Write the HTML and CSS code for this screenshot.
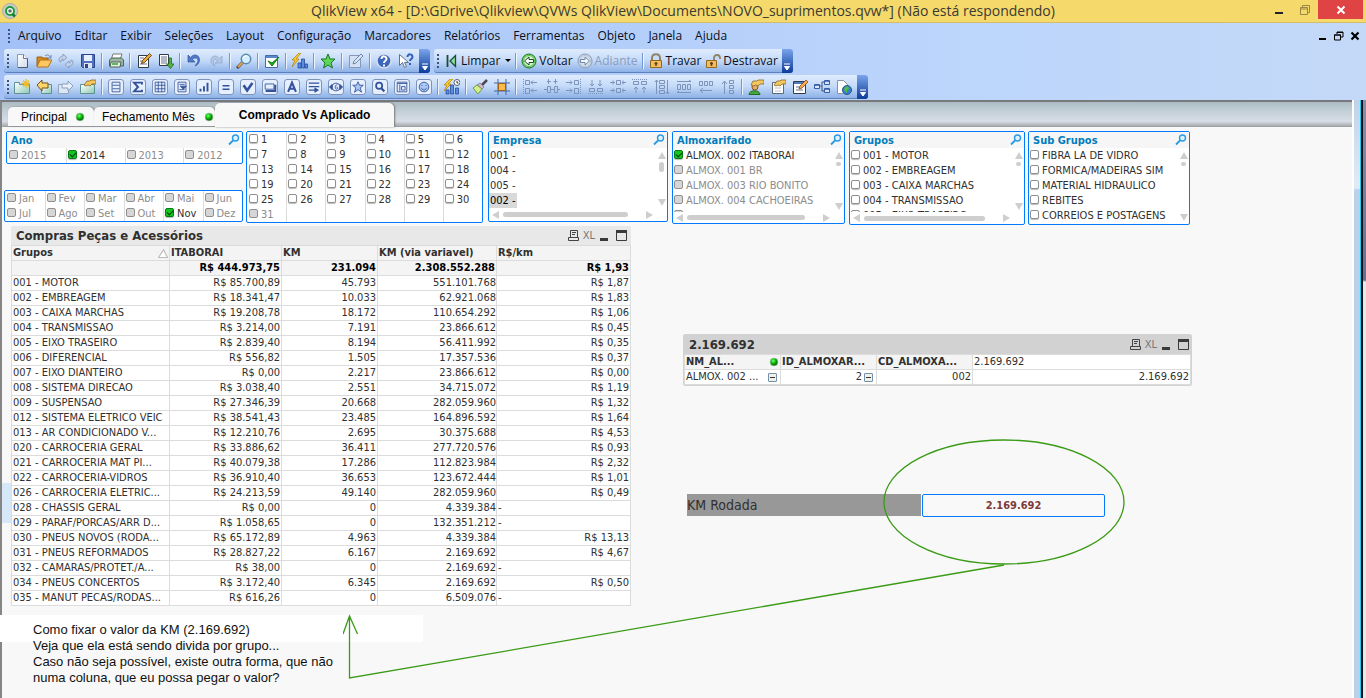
FILE: index.html
```html
<!DOCTYPE html>
<html lang="pt-BR">
<head>
<meta charset="utf-8">
<title>QlikView x64</title>
<link rel="stylesheet" href="styles.css">
</head>
<body>
<svg class="defs" aria-hidden="true">
  <defs>
    <linearGradient id="g-doc" x1="0" y1="0" x2="1" y2="1"><stop offset="0" stop-color="#fff"/><stop offset="1" stop-color="#cfdcec"/></linearGradient>
    <linearGradient id="g-teal" x1="0" y1="0" x2="1" y2="1"><stop offset="0" stop-color="#fff"/><stop offset="1" stop-color="#8cc9b4"/></linearGradient>
    <radialGradient id="g-led" cx=".4" cy=".35"><stop offset="0" stop-color="#7dff7d"/><stop offset=".5" stop-color="#12cf12"/><stop offset="1" stop-color="#067a06"/></radialGradient>
  </defs>
  <symbol id="new" viewBox="0 0 16 16"><path d="M3.5 1.5h6l4 4v9h-10z" fill="url(#g-doc)" stroke="#8d9bb2"/><path d="M9.500 1.500v4h4" fill="#fff" stroke="#6d7c94"/><path d="M4 14.500h9.500v-9" fill="none" stroke="#4d586a"/></symbol>
  <symbol id="open" viewBox="0 0 16 16"><path d="M1 13V4h5l1 1h5v8z" fill="#d58b22" stroke="#9c6214"/><path d="M1 14l3-7h12l-4 7z" fill="#ffc760" stroke="#b1751b"/><path d="M9 3c2-2 4-1 5 1m1-2v3h-3" fill="none" stroke="#657fae"/></symbol>
  <symbol id="reload" viewBox="0 0 16 16"><path d="M1 8c0-4 2-5 4-5V1l4 3.500L5 8V6C3.500 6 3 7 3 9z" fill="#c3d2e8" stroke="#8095b7" stroke-width=".8"/><path d="M15 8c0 4-2 5-4 5v2l-4-3.500L11 8v2c1.500 0 2-1 2-3z" fill="#c3d2e8" stroke="#8095b7" stroke-width=".8"/></symbol>
  <symbol id="save" viewBox="0 0 16 16"><path d="M1.500 1.500h13v13h-12l-1-1z" fill="#5272bd" stroke="#2c448d"/><path d="M4 2h8v6H4z" fill="#e7effc"/><path d="M4 10h8v5H4z" fill="#dfe6ee"/><path d="M5 11h3v4H5z" fill="#2c448d"/></symbol>
  <symbol id="print" viewBox="0 0 16 16"><path d="M5 1h9l-2 6H3z" fill="#fff" stroke="#777"/><path d="M1.500 7l2-2h10l2 2v6h-14z" fill="#9bb6a2" stroke="#4c6654"/><path d="M3 9h10l-1 5H2z" fill="#e5eee5" stroke="#4c6654"/><path d="M4 11h6" stroke="#37a037" stroke-width="1.500"/></symbol>
  <symbol id="edit" viewBox="0 0 16 16"><path d="M2.500 2.500h10v12h-10z" fill="#fff" stroke="#333b47"/><path d="M4 5h4M4 8h3M4 11h7" stroke="#66758b"/><path d="M5.500 10.500l1-3 7-7 2 2-7 7z" fill="#e9ab3c" stroke="#5a3b16" stroke-width=".9"/></symbol>
  <symbol id="script" viewBox="0 0 16 16"><path d="M1.500 1.500h9v11h-9z" fill="#fff" stroke="#333b47"/><path d="M3 4h6M3 6h6M3 8h6M3 10h6" stroke="#66758b"/><path d="M11 5v6H8.500l4 4.500 3.500-4.500h-2.500V5z" fill="#58b247" stroke="#1f6c19" stroke-width=".8"/></symbol>
  <symbol id="undo" viewBox="0 0 16 16"><path d="M2 2v7h7L6.500 6.500c3-3 7-1 5 3L9 13c6-2 6-11 0-11-2 0-3 1-4.500 2.500z" fill="#5278c8" stroke="#35549d" stroke-width=".7"/></symbol>
  <symbol id="redo" viewBox="0 0 16 16"><path d="M14 3v7H7l2.500-2.500c-2-2-5-1-4 2L7 13C1 11 2 3 7 3c2 0 3 1 4.500 2.500z" fill="#b4c6e2" stroke="#8ea5c8" stroke-width=".7"/></symbol>
  <symbol id="search" viewBox="0 0 16 16"><path d="M1 15l6-6" stroke="#3b4454" stroke-width="3"/><path d="M2 14l5-5" stroke="#eda33b" stroke-width="2"/><circle cx="10" cy="6" r="4.700" fill="#d2f0ff" stroke="#5987ad" stroke-width="1.500"/><path d="M7 5c1-2 3-2 4-2" stroke="#fff" fill="none"/></symbol>
  <symbol id="check" viewBox="0 0 16 16"><path d="M1.500 2.500h12v12h-12z" fill="#fff" stroke="#486ba5"/><path d="M2 3h11v2H2z" fill="#5987d0"/><path d="M4 8l4 5 7-9-7 6z" fill="#1daf20" stroke="#08820b"/></symbol>
  <symbol id="chart" viewBox="0 0 16 16"><path d="M6 10h3v5H6zM9.500 6h3v9h-3zM13 11h2.500v4H13z" fill="#5b8de0" stroke="#274b9b" stroke-width=".8"/><path d="M7 0L0 7h3l-3 7 7-8H4l5-6z" fill="#ffcb28" stroke="#af7e0b" stroke-width=".7"/></symbol>
  <symbol id="star" viewBox="0 0 16 16"><path d="M8 1l2 5h5l-4 4 1.500 5L8 12l-4.500 3L5 10 1 6h5z" fill="#61d557" stroke="#167822"/></symbol>
  <symbol id="note" viewBox="0 0 16 16"><path d="M1.500 2.500h11v12h-11z" fill="#d4e1f5" stroke="#8598b7"/><path d="M5 11l1-3 7-7 2 2-7 7z" fill="#d9e5f4" stroke="#7187a8"/></symbol>
  <symbol id="help" viewBox="0 0 16 16"><circle cx="8" cy="8" r="7" fill="#3c67bb" stroke="#d3ddef" stroke-width="1.500"/><path d="M5.500 6c0-4 5-3 5 0 0 2-2.500 1.500-2.500 4M8 11.500v2" fill="none" stroke="#fff" stroke-width="2"/></symbol>
  <symbol id="whats" viewBox="0 0 16 16"><path d="M1.500 1.500v11l3-3 2 5 2-1-2-4h4z" fill="#fff" stroke="#63728d"/><path d="M9.500 4c0-4 5-3 5 0 0 2-2.500 2-2.500 4M12 10v2" fill="none" stroke="#355eb4" stroke-width="2"/></symbol>
  <symbol id="clear" viewBox="0 0 16 16"><path d="M4.500 2v12" stroke="#184c35" stroke-width="1.800"/><path d="M12.500 2.500v11L7 8z" fill="#8fdc9a" stroke="#184c35" stroke-width="1.300"/></symbol>
  <symbol id="back" viewBox="0 0 16 16"><circle cx="8" cy="8" r="7" fill="#8fe083" stroke="#18741f"/><circle cx="8" cy="8" r="5.500" fill="#d7f4d1" stroke="#57bd50"/><path d="M3.500 8L8 4v2.500h4.500v3H8V12z" fill="#fff" stroke="#174f20"/></symbol>
  <symbol id="forward" viewBox="0 0 16 16"><circle cx="8" cy="8" r="7" fill="#d8e3f1" stroke="#8799b4"/><circle cx="8" cy="8" r="5.500" fill="none" stroke="#b1c0d5"/><path d="M12.500 8L8 4v2.500H3.500v3H8V12z" fill="#f0f5fc" stroke="#7287a8"/></symbol>
  <symbol id="lock" viewBox="0 0 16 16"><path d="M4 8V5c0-5 8-5 8 0v3" fill="none" stroke="#8f8467" stroke-width="2"/><path d="M2.500 7.500h11v7h-11z" fill="#f2bd5c" stroke="#976821"/><path d="M8 9v4M6.500 10.500h3" stroke="#5d421b" stroke-width="1.500"/></symbol>
  <symbol id="unlock" viewBox="0 0 16 16"><path d="M9 8V5c0-4 6-4 6 0v1" fill="none" stroke="#8f8467" stroke-width="1.800"/><path d="M1.500 7.500h10v7h-10z" fill="#f2bd5c" stroke="#976821"/><path d="M6.500 9v4M5 10.500h3" stroke="#5d421b" stroke-width="1.500"/></symbol>
  <symbol id="sheet-new" viewBox="0 0 16 16"><path d="M.5 3.500h5v2h10v9H.5z" fill="url(#g-teal)" stroke="#5d9293"/><path d="M12 0v9M7.500 4.500h9M9 1.500l6 6M15 1.500l-6 6" stroke="#f0bd28" stroke-width="1.300"/></symbol>
  <symbol id="sheet-back" viewBox="0 0 16 16"><path d="M5.500 5.500h10v9h-10z" fill="url(#g-teal)" stroke="#5d9293"/><path d="M1 6l5-5v3h6v5H6v3z" fill="#ffd66a" stroke="#735019"/></symbol>
  <symbol id="sheet-fwd" viewBox="0 0 16 16"><path d="M.5 5.500h10v9H.5z" fill="#dce7f6" stroke="#91a3bd"/><path d="M15 7l-5-5v3H4v4h6v3z" fill="#e8f0fa" stroke="#8b9fbd"/></symbol>
  <symbol id="sheet-prop" viewBox="0 0 16 16"><path d="M.5 5.500h14v9H.5z" fill="url(#g-teal)" stroke="#5d9293"/><path d="M4 6l3-4h3l1-1h5v4h-4l-2 2-2-1-2 1z" fill="#f3c861" stroke="#8c6420" stroke-width=".8"/></symbol>
  <symbol id="o-list" viewBox="0 0 16 16"><path d="M3.500 2.500h9v11h-9zM4 6h8M4 10h8"/></symbol>
  <symbol id="o-sum" viewBox="0 0 16 16"><path d="M12.500 5V3h-9L8 8l-4.500 5h9v-2" stroke-width="2.200"/></symbol>
  <symbol id="o-table" viewBox="0 0 16 16"><path d="M2.500 2.500h11v11h-11zM3 6h11M3 10h11M6 2v12M10 2v12"/></symbol>
  <symbol id="o-multi" viewBox="0 0 16 16"><path d="M3.500 2.500h9v11h-9zM5 5h6M5 11h6"/><path d="M6 7h7l-3.500 3.500z" fill="#35539d"/></symbol>
  <symbol id="o-chart" viewBox="0 0 16 16"><path d="M4 10v3M8 7v6M12 3v10" stroke-width="2.200"/></symbol>
  <symbol id="o-input" viewBox="0 0 16 16"><path d="M4 6.500h8M4 10.500h8" stroke-width="1.800"/></symbol>
  <symbol id="o-current" viewBox="0 0 16 16"><path d="M3 6l4 6 6-8.500" stroke-width="3"/></symbol>
  <symbol id="o-button" viewBox="0 0 16 16"><path d="M2.500 4.500h10v6h-10z"/><path d="M3 12.500h11v-7" stroke-width="2.400"/></symbol>
  <symbol id="o-text" viewBox="0 0 16 16"><path d="M3.500 13.500L8 3l4.500 10.500M5 10h6" stroke-width="2.400"/></symbol>
  <symbol id="o-line" viewBox="0 0 16 16"><path d="M2 3.500h12M2 7.500h12M2 11.500h8" stroke-width="1.500"/><path d="M9 9l4 2.500-4 2.500z" fill="#35539d"/></symbol>
  <symbol id="o-slider" viewBox="0 0 16 16"><path d="M3.500 5v6L.5 8zM12.500 5v6l3-3z" fill="#35539d"/><circle cx="8" cy="8" r="4.500"/><path d="M9.500 5.500c-3-.5-3 5-1 5s2-2.500 0-2.500"/></symbol>
  <symbol id="o-star" viewBox="0 0 16 16"><path d="M8 2l1.700 4H14l-3.500 3 1.500 5-4-3-4 3 1.500-5L2 6h4.300z" fill="#a9c8f3"/></symbol>
  <symbol id="o-search" viewBox="0 0 16 16"><circle cx="7" cy="6.500" r="3.500" stroke-width="2"/><path d="M9.500 9.500L13 13" stroke-width="2.500"/></symbol>
  <symbol id="o-container" viewBox="0 0 16 16"><path d="M2.500 2.500h11v11h-11zM3 4h11M5.500 5v8M7.500 7.500h4v4h-4z"/></symbol>
  <symbol id="o-custom" viewBox="0 0 16 16"><circle cx="8" cy="8" r="5.500" fill="#a9c8f3"/><path d="M5.500 6v1M10.500 6v1M5 9c1 3 5 3 6 0"/></symbol>
  <symbol id="quick" viewBox="0 0 16 16"><path d="M2 11h3v4H2zM6.500 6h3v9h-3zM11.500 9h3v6h-3z" fill="#5b8de0" stroke="#274b9b" stroke-width=".8"/><path d="M6 0L0 6h3L0 12l7-7H4l5-5z" fill="#ffcb28" stroke="#af7e0b" stroke-width=".7"/><circle cx="13" cy="3.500" r="3" fill="#fff" stroke="#57606d"/><path d="M13 2v2h1.500" fill="none" stroke="#333"/></symbol>
  <symbol id="brush" viewBox="0 0 16 16"><path d="M15 1l-5 5" stroke="#4b4a52" stroke-width="2.500"/><path d="M8 4l4 4-2 2-5-4z" fill="#d9b5d4" stroke="#7b7085" stroke-width=".8"/><path d="M5 6l5 4-4 5-5-6z" fill="#d4f08c" stroke="#71994b"/></symbol>
  <symbol id="grid" viewBox="0 0 16 16"><path d="M4 0v16M12 0v16M0 4h16M0 12h16" stroke="#4267a6"/><path d="M4.500 4.500h7v7h-7z" fill="#ffb947" stroke="#99651b"/></symbol>
  <symbol id="a-left" viewBox="0 0 16 16"><path d="M1.500 0v16" stroke-dasharray="1 1"/><path d="M3.500 1.500h4v4h-4zM3.500 9.500h4v5h-4zM15 3.500H9l2-2M9 3.500l2 2M15 11.500H9l2-2M9 11.500l2 2"/></symbol>
  <symbol id="a-mid" viewBox="0 0 16 16"><path d="M3.500 7.500h3v6h-3zM10.500 7.500h3v6h-3zM4.500 0v5M3 2.500h4M11.500 0v5M9.500 2.500h4M0 10.500h3M7 10.500h3M14 10.500h2"/></symbol>
  <symbol id="a-right" viewBox="0 0 16 16"><path d="M14.500 0v16" stroke-dasharray="1 1"/><path d="M8.500 1.500h4v4h-4zM8.500 9.500h4v5h-4zM0 3.500h6l-2-2M6 3.500l-2 2M0 11.500h6l-2-2M6 11.500l-2 2"/></symbol>
  <symbol id="a-bottom" viewBox="0 0 16 16"><path d="M0 14.500h16" stroke-dasharray="1 1"/><path d="M1.500 9.500h5v3h-5zM9.500 9.500h5v3h-5zM4 1v6L2 5M4 7l2-2M12 1v6l-2-2M12 7l2-2"/></symbol>
  <symbol id="a-hspace" viewBox="0 0 16 16"><path d="M6.500 1.500h4v4h-4zM6.500 9.500h4v4h-4zM0 3.500h5M3 1.500v4M12 3.500h4M13 1.500v4M0 11.500h5M3 9.500v4M12 11.500h4M13 9.500v4"/></symbol>
  <symbol id="a-top" viewBox="0 0 16 16"><path d="M0 .5h16" stroke-dasharray="1 1"/><path d="M1.500 2.500h5v3h-5zM9.500 2.500h5v3h-5zM4 14V8L2 10M4 8l2 2M12 14V8l-2 2M12 8l2 2"/></symbol>
  <symbol id="a-vdist" viewBox="0 0 16 16"><path d="M5.500 1.500h5v3h-5zM5.500 6.500h5v3h-5zM5.500 11.500h5v3h-5zM2.500 1v14M1 3l1.500-2L4 3M13.500 1v14M12 13l1.500 2 1.500-2"/></symbol>
  <symbol id="a-hdist" viewBox="0 0 16 16"><path d="M1.500 5.500h3v5h-3zM6.500 5.500h3v5h-3zM11.500 5.500h3v5h-3zM1 2.500h14M1 13.500h14M13 1l2 1.500M3 12l-2 1.500"/></symbol>
  <symbol id="a-lspace" viewBox="0 0 16 16"><path d="M1.500 2.500h3v4h-3zM6.500 2.500h3v4h-3zM11.500 2.500h3v4h-3zM14 11.500H2l3-2.500M2 11.500L5 14"/></symbol>
  <symbol id="a-tspace" viewBox="0 0 16 16"><path d="M9.500 1.500h4v3h-4zM9.500 6.500h4v3h-4zM9.500 11.500h4v3h-4zM4.500 15V2L2 5M4.500 2L7 5"/></symbol>
  <symbol id="user" viewBox="0 0 16 16"><circle cx="7" cy="8" r="3" fill="#e8ad62" stroke="#86591e"/><path d="M1 15.500c0-5 11-5 11 0z" fill="#44a83e" stroke="#246a20"/><path d="M3 6l2-4h4l1-1h6v4h-4l-2 2-2-1-3 1z" fill="#f3c861" stroke="#8c6420" stroke-width=".8"/></symbol>
  <symbol id="docprop" viewBox="0 0 16 16"><path d="M2.500 3.500h11v11h-11z" fill="#fff" stroke="#5d6879"/><path d="M5 9h6M5 12h6" stroke="#b9c4d3"/><path d="M4 6l3-4h3l1-1h5v4h-4l-2 2-2-1-2 1z" fill="#f3c861" stroke="#8c6420" stroke-width=".8"/></symbol>
  <symbol id="editscript" viewBox="0 0 16 16"><path d="M1.500 2.500h12v12h-12z" fill="#fff" stroke="#343c48"/><path d="M2 4h11" stroke="#5379b9" stroke-width="2"/><path d="M4 8h4M4 11h7" stroke="#66758b"/><path d="M7 10l1-3 6-6 2 2-6 6z" fill="#efb14c" stroke="#913d2e" stroke-width=".8"/></symbol>
  <symbol id="viewer" viewBox="0 0 16 16"><path d="M5 7h3V3h3M8 7v5h3" fill="none" stroke="#3c527d"/><path d="M.5 5.500h5v4h-5zM10.500 1.500h5v4h-5zM10.500 9.500h5v4h-5z" fill="#d6e7ff" stroke="#355caa"/><path d="M1 6h4M11 2h4M11 10h4" stroke="#355caa" stroke-width="1.500"/></symbol>
  <symbol id="web" viewBox="0 0 16 16"><path d="M1.500 1.500h6l4 4v9h-10z" fill="#fff" stroke="#8793a6"/><circle cx="11" cy="11" r="4.500" fill="#3480cf" stroke="#27528b"/><path d="M9 8l3-1 1 3-2 1v3l-3-3z" fill="#55b947"/></symbol>
  <symbol id="lens" viewBox="0 0 12 12"><circle cx="7.500" cy="4" r="3" fill="#dff3ff" stroke="#2b9be3" stroke-width="1.400"/><path d="M5 6.500L1 10.500" stroke="#2b9be3" stroke-width="1.800"/></symbol>
  <symbol id="p-print" viewBox="0 0 11 11"><path d="M2.500 7.500v-7h7v7M.5 7.500h10v3H.5zM4 2.500h4M4 4.500h3" fill="none" stroke="#444"/></symbol>
  <symbol id="p-min" viewBox="0 0 11 11"><path d="M1 8h8v3H1z" fill="#3a3a3a"/></symbol>
  <symbol id="p-max" viewBox="0 0 11 11"><path d="M.5 1h10v9.500H.5z" fill="none" stroke="#3a3a3a"/><path d="M0 0h11v3H0z" fill="#3a3a3a"/></symbol>
  <symbol id="led" viewBox="0 0 10 10"><circle cx="5" cy="5" r="4" fill="url(#g-led)" stroke="#b9c9b9" stroke-width=".6"/></symbol>
</svg>

<header class="titlebar">
  <svg class="logo" viewBox="0 0 16 16"><circle cx="8" cy="8" r="7.500" fill="#c9cdc6" stroke="#a9afa5"/><circle cx="8" cy="8" r="4" fill="#fff" stroke="#1e9b3c" stroke-width="2"/><circle cx="8" cy="8" r="1.800" fill="#62746a"/><path d="M10.500 11l2.500 2.500" stroke="#167c30" stroke-width="2.500"/></svg>
  <h1>QlikView x64 - [D:\GDrive\Qlikview\QVWs QlikView\Documents\NOVO_suprimentos.qvw*] (Não está respondendo)</h1>
  <div class="window-buttons">
    <button aria-label="Minimizar"><svg viewBox="0 0 10 10"><path d="M1 7h8v2H1z" fill="#222"/></svg></button>
    <button aria-label="Restaurar"><svg viewBox="0 0 10 10"><path d="M.5 2.500h7v7h-7zM0 4h8M2.500 2V.5h7v7H8" fill="none" stroke="#9a8747"/></svg></button>
    <button class="close" aria-label="Fechar"><svg viewBox="0 0 10 10"><path d="M1.500 1.500l7 7M8.500 1.500l-7 7" stroke="#fff" stroke-width="2"/></svg></button>
  </div>
</header>

<div class="command-area">
  <nav class="menubar">
    <i class="grip"></i>
    <button>Arquivo</button><button>Editar</button><button>Exibir</button><button>Seleções</button><button>Layout</button><button>Configuração</button><button>Marcadores</button><button>Relatórios</button><button>Ferramentas</button><button>Objeto</button><button>Janela</button><button>Ajuda</button>
    <div class="doc-buttons">
      <button aria-label="Minimizar documento"><svg viewBox="0 0 10 10"><path d="M1 7h7v2H1z"/></svg></button>
      <button aria-label="Restaurar documento"><svg viewBox="0 0 10 10"><path d="M.5 4h6v5h-6zM0 4h7M3 3V1h6v5H7M3 1.500h6" fill="none" stroke="#000"/></svg></button>
      <button aria-label="Fechar documento"><svg viewBox="0 0 10 10"><path d="M1.500 1.500l7 7M8.500 1.500l-7 7" stroke="#000" stroke-width="2.200"/></svg></button>
    </div>
  </nav>
  <div class="toolrow">
    <div class="toolbar" role="toolbar" aria-label="Padrão">
      <i class="grip"></i>
      <button aria-label="Novo"><svg><use href="#new"/></svg></button>
      <button aria-label="Abrir"><svg><use href="#open"/></svg></button>
      <button aria-label="Atualizar"><svg><use href="#reload"/></svg></button>
      <button aria-label="Salvar"><svg><use href="#save"/></svg></button>
      <i class="sep"></i>
      <button aria-label="Imprimir"><svg><use href="#print"/></svg></button>
      <i class="sep"></i>
      <button aria-label="Editar script"><svg><use href="#edit"/></svg></button>
      <button aria-label="Recarregar"><svg><use href="#script"/></svg></button>
      <i class="sep"></i>
      <button aria-label="Desfazer"><svg><use href="#undo"/></svg></button>
      <button aria-label="Refazer"><svg><use href="#redo"/></svg></button>
      <i class="sep"></i>
      <button aria-label="Pesquisar"><svg><use href="#search"/></svg></button>
      <i class="sep"></i>
      <button aria-label="Seleções atuais"><svg><use href="#check"/></svg></button>
      <i class="sep"></i>
      <button aria-label="Gráfico rápido"><svg><use href="#chart"/></svg></button>
      <i class="sep"></i>
      <button aria-label="Adicionar marcador"><svg><use href="#star"/></svg></button>
      <i class="sep"></i>
      <button aria-label="Notas"><svg><use href="#note"/></svg></button>
      <i class="sep"></i>
      <button aria-label="Ajuda"><svg><use href="#help"/></svg></button>
      <button aria-label="O que é isto"><svg><use href="#whats"/></svg></button>
      <button class="cap" aria-label="Mais botões"><svg viewBox="0 0 8 8"><path d="M1 1h6M1.500 3.500h5L4 7z"/></svg></button>
    </div>
    <div class="toolbar" role="toolbar" aria-label="Navegação">
      <i class="grip"></i>
      <button class="text"><svg><use href="#clear"/></svg>Limpar<b class="drop"></b></button>
      <i class="sep"></i>
      <button class="text"><svg><use href="#back"/></svg>Voltar</button>
      <button class="text" disabled><svg><use href="#forward"/></svg>Adiante</button>
      <i class="sep"></i>
      <button class="text"><svg><use href="#lock"/></svg>Travar</button>
      <button class="text"><svg><use href="#unlock"/></svg>Destravar</button>
      <button class="cap" aria-label="Mais botões"><svg viewBox="0 0 8 8"><path d="M1 1h6M1.500 3.500h5L4 7z"/></svg></button>
    </div>
  </div>
  <div class="toolrow">
    <div class="toolbar" role="toolbar" aria-label="Design">
      <i class="grip"></i>
      <button aria-label="Nova pasta"><svg><use href="#sheet-new"/></svg></button>
      <button aria-label="Promover pasta"><svg><use href="#sheet-back"/></svg></button>
      <button aria-label="Rebaixar pasta"><svg><use href="#sheet-fwd"/></svg></button>
      <button aria-label="Propriedades da pasta"><svg><use href="#sheet-prop"/></svg></button>
      <i class="sep"></i>
      <button class="obj" aria-label="Lista"><svg><use href="#o-list"/></svg></button>
      <button class="obj" aria-label="Estatística"><svg><use href="#o-sum"/></svg></button>
      <button class="obj" aria-label="Tabela"><svg><use href="#o-table"/></svg></button>
      <button class="obj" aria-label="Seleção múltipla"><svg><use href="#o-multi"/></svg></button>
      <button class="obj" aria-label="Gráfico"><svg><use href="#o-chart"/></svg></button>
      <button class="obj" aria-label="Entrada"><svg><use href="#o-input"/></svg></button>
      <button class="obj" aria-label="Seleções"><svg><use href="#o-current"/></svg></button>
      <button class="obj" aria-label="Botão"><svg><use href="#o-button"/></svg></button>
      <button class="obj" aria-label="Texto"><svg><use href="#o-text"/></svg></button>
      <button class="obj" aria-label="Linha"><svg><use href="#o-line"/></svg></button>
      <button class="obj" aria-label="Controle deslizante"><svg><use href="#o-slider"/></svg></button>
      <button class="obj" aria-label="Marcador"><svg><use href="#o-star"/></svg></button>
      <button class="obj" aria-label="Pesquisa"><svg><use href="#o-search"/></svg></button>
      <button class="obj" aria-label="Contêiner"><svg><use href="#o-container"/></svg></button>
      <button class="obj" aria-label="Personalizado"><svg><use href="#o-custom"/></svg></button>
      <i class="sep"></i>
      <button aria-label="Assistente de gráfico"><svg><use href="#quick"/></svg></button>
      <i class="sep"></i>
      <button aria-label="Pincel"><svg><use href="#brush"/></svg></button>
      <button aria-label="Grade"><svg><use href="#grid"/></svg></button>
      <i class="sep"></i>
      <button class="align" aria-label="Alinhar à esquerda"><svg><use href="#a-left"/></svg></button>
      <button class="align" aria-label="Centralizar"><svg><use href="#a-mid"/></svg></button>
      <button class="align" aria-label="Alinhar à direita"><svg><use href="#a-right"/></svg></button>
      <button class="align" aria-label="Alinhar abaixo"><svg><use href="#a-bottom"/></svg></button>
      <button class="align" aria-label="Centralizar na horizontal"><svg><use href="#a-hspace"/></svg></button>
      <button class="align" aria-label="Alinhar acima"><svg><use href="#a-top"/></svg></button>
      <button class="align" aria-label="Espaço vertical"><svg><use href="#a-vdist"/></svg></button>
      <button class="align" aria-label="Espaço horizontal"><svg><use href="#a-hdist"/></svg></button>
      <button class="align" aria-label="Ajustar à esquerda"><svg><use href="#a-lspace"/></svg></button>
      <button class="align" aria-label="Ajustar acima"><svg><use href="#a-tspace"/></svg></button>
      <i class="sep"></i>
      <button aria-label="Preferências"><svg><use href="#user"/></svg></button>
      <button aria-label="Propriedades do documento"><svg><use href="#docprop"/></svg></button>
      <button aria-label="Editar módulo"><svg><use href="#editscript"/></svg></button>
      <button aria-label="Visualizador de tabelas"><svg><use href="#viewer"/></svg></button>
      <button aria-label="WebView"><svg><use href="#web"/></svg></button>
      <button class="cap" aria-label="Mais botões"><svg viewBox="0 0 8 8"><path d="M1 1h6M1.500 3.500h5L4 7z"/></svg></button>
    </div>
  </div>
</div>

<div class="workspace">
  <main class="document">
    <div class="tabs" role="tablist">
      <button role="tab">Principal<svg><use href="#led"/></svg></button>
      <button role="tab" class="second">Fechamento Mês<svg><use href="#led"/></svg></button>
      <button role="tab" class="active" aria-selected="true">Comprado Vs Aplicado</button>
    </div>
    <div class="sheet">
      <section class="filters">
        <div class="dates">
          <fieldset class="listbox year">
            <div class="caption"><h2>Ano</h2><svg><use href="#lens"/></svg></div>
            <div class="cells four">
              <label class="off"><input type="checkbox">2015</label><label><input type="checkbox" checked>2014</label><label class="off"><input type="checkbox">2013</label><label class="off"><input type="checkbox">2012</label>
            </div>
          </fieldset>
          <fieldset class="listbox month" aria-label="Mês">
            <div class="cells six">
              <label class="off"><input type="checkbox">Jan</label><label class="off"><input type="checkbox">Fev</label><label class="off"><input type="checkbox">Mar</label><label class="off"><input type="checkbox">Abr</label><label class="off"><input type="checkbox">Mai</label><label class="off"><input type="checkbox">Jun</label>
              <label class="off"><input type="checkbox">Jul</label><label class="off"><input type="checkbox">Ago</label><label class="off"><input type="checkbox">Set</label><label class="off"><input type="checkbox">Out</label><label><input type="checkbox" checked>Nov</label><label class="off"><input type="checkbox">Dez</label>
            </div>
          </fieldset>
        </div>
        <fieldset class="listbox days" aria-label="Dia">
          <div class="cells six">
            <label><input type="checkbox">1</label><label><input type="checkbox">2</label><label><input type="checkbox">3</label><label><input type="checkbox">4</label><label><input type="checkbox">5</label><label><input type="checkbox">6</label>
            <label><input type="checkbox">7</label><label><input type="checkbox">8</label><label><input type="checkbox">9</label><label><input type="checkbox">10</label><label><input type="checkbox">11</label><label><input type="checkbox">12</label>
            <label><input type="checkbox">13</label><label><input type="checkbox">14</label><label><input type="checkbox">15</label><label><input type="checkbox">16</label><label><input type="checkbox">17</label><label><input type="checkbox">18</label>
            <label><input type="checkbox">19</label><label><input type="checkbox">20</label><label><input type="checkbox">21</label><label><input type="checkbox">22</label><label><input type="checkbox">23</label><label><input type="checkbox">24</label>
            <label><input type="checkbox">25</label><label><input type="checkbox">26</label><label><input type="checkbox">27</label><label><input type="checkbox">28</label><label><input type="checkbox">29</label><label><input type="checkbox">30</label>
            <label class="off"><input type="checkbox">31</label><span></span><span></span><span></span><span></span><span></span>
          </div>
        </fieldset>
        <section class="listbox company">
          <div class="caption"><h2>Empresa</h2><svg><use href="#lens"/></svg></div>
          <div class="scroller"><ul class="plain"><li>001 -</li><li>004 -</li><li>005 -</li><li class="chosen">002 -</li></ul><div class="vbar"><i class="up"></i><i class="thumb long"></i><i class="down"></i></div></div>
          <div class="hbar"><i class="left"></i><i class="thumb"></i><i class="right"></i></div>
        </section>
        <fieldset class="listbox store">
          <div class="caption"><h2>Almoxarifado</h2><svg><use href="#lens"/></svg></div>
          <div class="scroller clipped"><div class="options">
            <label><input type="checkbox" checked>ALMOX. 002 ITABORAI</label><label class="off"><input type="checkbox">ALMOX. 001 BR</label><label class="off"><input type="checkbox">ALMOX. 003 RIO BONITO</label><label class="off"><input type="checkbox">ALMOX. 004 CACHOEIRAS</label><label class="off"><input type="checkbox"></label>
          </div><div class="vbar"><i class="up"></i><i class="thumb"></i><i class="down"></i></div></div>
          <div class="hbar"><i class="left"></i><i class="thumb"></i><i class="right"></i></div>
        </fieldset>
        <fieldset class="listbox group">
          <div class="caption"><h2>Grupos</h2><svg><use href="#lens"/></svg></div>
          <div class="scroller clipped"><div class="options">
            <label><input type="checkbox">001 - MOTOR</label><label><input type="checkbox">002 - EMBREAGEM</label><label><input type="checkbox">003 - CAIXA MARCHAS</label><label><input type="checkbox">004 - TRANSMISSAO</label><label><input type="checkbox">005 - EIXO TRASEIRO</label>
          </div><div class="vbar"><i class="up"></i><i class="thumb"></i><i class="down"></i></div></div>
          <div class="hbar"><i class="left"></i><i class="thumb"></i><i class="right"></i></div>
        </fieldset>
        <fieldset class="listbox subgroup">
          <div class="caption"><h2>Sub Grupos</h2><svg><use href="#lens"/></svg></div>
          <div class="scroller"><div class="options">
            <label><input type="checkbox">FIBRA LA DE VIDRO</label><label><input type="checkbox">FORMICA/MADEIRAS SIM</label><label><input type="checkbox">MATERIAL HIDRAULICO</label><label><input type="checkbox">REBITES</label><label><input type="checkbox">CORREIOS E POSTAGENS</label>
          </div><div class="vbar"><i class="up"></i><i class="thumb"></i><i class="down"></i></div></div>
        </fieldset>
      </section>

      <div class="panels">
        <section class="panel main-panel">
          <div class="panel-title"><h2>Compras Peças e Acessórios</h2><div class="panel-tools"><button aria-label="Imprimir"><svg><use href="#p-print"/></svg></button><button class="xl">XL</button><button aria-label="Minimizar"><svg><use href="#p-min"/></svg></button><button class="max" aria-label="Maximizar"><svg><use href="#p-max"/></svg></button></div></div>
          <table>
            <colgroup><col class="c-group"><col class="c-value"><col class="c-km"><col class="c-var"><col></colgroup>
            <thead>
              <tr><th><span class="sortable">Grupos<svg viewBox="0 0 9 9"><path d="M.5 8.500L5 1.500l3.500 7z" fill="#fff" stroke="#bbb"/></svg></span></th><th>ITABORAI</th><th>KM</th><th>KM (via variavel)</th><th>R$/km</th></tr>
              <tr class="total"><td></td><td>R$ 444.973,75</td><td>231.094</td><td>2.308.552.288</td><td>R$ 1,93</td></tr>
            </thead>
            <tbody>
              <tr><td>001 - MOTOR</td><td>R$ 85.700,89</td><td>45.793</td><td>551.101.768</td><td>R$ 1,87</td></tr>
              <tr><td>002 - EMBREAGEM</td><td>R$ 18.341,47</td><td>10.033</td><td>62.921.068</td><td>R$ 1,83</td></tr>
              <tr><td>003 - CAIXA MARCHAS</td><td>R$ 19.208,78</td><td>18.172</td><td>110.654.292</td><td>R$ 1,06</td></tr>
              <tr><td>004 - TRANSMISSAO</td><td>R$ 3.214,00</td><td>7.191</td><td>23.866.612</td><td>R$ 0,45</td></tr>
              <tr><td>005 - EIXO TRASEIRO</td><td>R$ 2.839,40</td><td>8.194</td><td>56.411.992</td><td>R$ 0,35</td></tr>
              <tr><td>006 - DIFERENCIAL</td><td>R$ 556,82</td><td>1.505</td><td>17.357.536</td><td>R$ 0,37</td></tr>
              <tr><td>007 - EIXO DIANTEIRO</td><td>R$ 0,00</td><td>2.217</td><td>23.866.612</td><td>R$ 0,00</td></tr>
              <tr><td>008 - SISTEMA DIRECAO</td><td>R$ 3.038,40</td><td>2.551</td><td>34.715.072</td><td>R$ 1,19</td></tr>
              <tr><td>009 - SUSPENSAO</td><td>R$ 27.346,39</td><td>20.668</td><td>282.059.960</td><td>R$ 1,32</td></tr>
              <tr><td>012 - SISTEMA ELETRICO VEIC</td><td>R$ 38.541,43</td><td>23.485</td><td>164.896.592</td><td>R$ 1,64</td></tr>
              <tr><td>013 - AR CONDICIONADO V...</td><td>R$ 12.210,76</td><td>2.695</td><td>30.375.688</td><td>R$ 4,53</td></tr>
              <tr><td>020 - CARROCERIA GERAL</td><td>R$ 33.886,62</td><td>36.411</td><td>277.720.576</td><td>R$ 0,93</td></tr>
              <tr><td>021 - CARROCERIA MAT PI...</td><td>R$ 40.079,38</td><td>17.286</td><td>112.823.984</td><td>R$ 2,32</td></tr>
              <tr><td>022 - CARROCERIA-VIDROS</td><td>R$ 36.910,40</td><td>36.653</td><td>123.672.444</td><td>R$ 1,01</td></tr>
              <tr><td>026 - CARROCERIA ELETRIC...</td><td>R$ 24.213,59</td><td>49.140</td><td>282.059.960</td><td>R$ 0,49</td></tr>
              <tr><td>028 - CHASSIS GERAL</td><td>R$ 0,00</td><td>0</td><td>4.339.384</td><td class="none">-</td></tr>
              <tr><td>029 - PARAF/PORCAS/ARR D...</td><td>R$ 1.058,65</td><td>0</td><td>132.351.212</td><td class="none">-</td></tr>
              <tr><td>030 - PNEUS NOVOS (RODA...</td><td>R$ 65.172,89</td><td>4.963</td><td>4.339.384</td><td>R$ 13,13</td></tr>
              <tr><td>031 - PNEUS REFORMADOS</td><td>R$ 28.827,22</td><td>6.167</td><td>2.169.692</td><td>R$ 4,67</td></tr>
              <tr><td>032 - CAMARAS/PROTET./A...</td><td>R$ 38,00</td><td>0</td><td>2.169.692</td><td class="none">-</td></tr>
              <tr><td>034 - PNEUS CONCERTOS</td><td>R$ 3.172,40</td><td>6.345</td><td>2.169.692</td><td>R$ 0,50</td></tr>
              <tr><td>035 - MANUT PECAS/RODAS...</td><td>R$ 616,26</td><td>0</td><td>6.509.076</td><td class="none">-</td></tr>
            </tbody>
          </table>
        </section>

        <div class="side">
          <section class="panel side-panel">
            <div class="panel-title"><h2>2.169.692</h2><div class="panel-tools"><button aria-label="Imprimir"><svg><use href="#p-print"/></svg></button><button class="xl">XL</button><button aria-label="Minimizar"><svg><use href="#p-min"/></svg></button><button class="max" aria-label="Maximizar"><svg><use href="#p-max"/></svg></button></div></div>
            <table>
              <colgroup><col class="c-id"><col class="c-id"><col class="c-id"><col></colgroup>
              <thead><tr><th><span class="sortable">NM_AL...<svg><use href="#led"/></svg></span></th><th>ID_ALMOXAR...</th><th>CD_ALMOXA...</th><th class="measure">2.169.692</th></tr></thead>
              <tbody><tr><td><span class="sortable">ALMOX. 002 ...<button class="fold" aria-label="Recolher NM"></button></span></td><td><span class="folded">2<button class="fold" aria-label="Recolher ID"></button></span></td><td>002</td><td>2.169.692</td></tr></tbody>
            </table>
          </section>
          <div class="km-row"><label for="km">KM Rodada</label><input id="km" type="text" value="2.169.692"></div>
        </div>
      </div>

      <i class="edge-mark"></i>
      <aside class="comment">
        <p>Como fixar o valor da KM (2.169.692)<br>Veja que ela está sendo divida por grupo...<br>Caso não seja possível, existe outra forma, que não<br>numa coluna, que eu possa pegar o valor?</p>
      </aside>
      <svg class="callout" viewBox="0 0 784 242" aria-hidden="true"><ellipse cx="661" cy="63" rx="120" ry="62"/><path d="M661 126L6.500 239V177M0 195l6.500-18 8 18"/></svg>
    </div>
  </main>
  <div class="frame-edge"></div>
  <div class="backdrop"></div>
</div>
</body>
</html>
```
FILE: styles.css
```css
* { box-sizing: border-box; }
body {
  margin: 0;
  min-height: 100vh;
  display: flex;
  flex-direction: column;
  overflow: hidden;
  font: 11px/15px "DejaVu Sans Condensed", "DejaVu Sans", sans-serif;
  color: #303030;
}
button { border: 0; padding: 0; margin: 0; background: none; font: inherit; color: inherit; }
h1, h2, p, ul { margin: 0; padding: 0; font-weight: normal; }
ul { list-style: none; }
fieldset { margin: 0; padding: 0; min-width: 0; }
.defs { position: absolute; width: 0; height: 0; }

/* Window chrome */
.titlebar {
  display: flex;
  align-items: center;
  height: 23px;
  padding-left: 2px;
  background: #f5d96b;
  border-bottom: 1px solid #d3bd68;
}
.logo { width: 16px; height: 16px; }
.titlebar h1 { flex: 1; padding-left: 82px; text-align: center; font: 14px/22px "Open Sans", sans-serif; color: #3b3a33; white-space: nowrap; }
.window-buttons { display: flex; align-self: flex-start; margin-right: 3px; }
.window-buttons button { width: 26px; height: 19px; }
.window-buttons .close { width: 45px; background: #e04343; }
.window-buttons svg { width: 10px; height: 10px; display: block; margin: 0 auto; }

.command-area { height: 77px; background: linear-gradient(90deg, #a3c1f7, #bcd5fb 70%, #c4d9f8); }
.menubar { display: flex; align-items: center; height: 26px; padding-left: 5px; font: 12px/18px "Open Sans", sans-serif; color: #0b1020; }
.menubar > button { margin-right: 13px; }
.menubar .grip { margin-right: 8px; }
.doc-buttons { display: flex; gap: 6px; margin: 0 6px 0 auto; }
.doc-buttons svg { display: block; width: 10px; height: 10px; }
.grip { flex: none; width: 2px; height: 14px; margin: 0 2px 0 3px; background: repeating-linear-gradient(#3e5480 0 2px, transparent 2px 4px); }
.toolrow { display: flex; gap: 4px; padding-left: 4px; height: 26px; }
.toolbar {
  display: flex;
  align-items: center;
  height: 24px;
  border-bottom: 1px solid #5d80bb;
  border-radius: 3px;
  background: linear-gradient(#e0ecfd, #c4daf9 50%, #8db1e6);
}
.toolbar button { width: 22px; height: 22px; display: flex; align-items: center; justify-content: center; }
.toolbar svg { width: 16px; height: 16px; }
.toolbar .sep { width: 2px; height: 16px; margin: 0 2px; background: linear-gradient(90deg, #7397d0 50%, #eef5ff 50%); }
.toolbar button.text { width: auto; gap: 2px; padding: 0 2px; font: 12px/18px "Open Sans", sans-serif; color: #0b1020; }
.toolbar button.text:disabled { color: #8b9cba; }
.drop { margin-left: 3px; border: 3px solid transparent; border-top-color: #000; border-bottom: 0; }
.toolbar button.cap { width: 11px; height: 24px; margin-left: 2px; align-items: flex-end; border-radius: 0 3px 3px 0; background: linear-gradient(#7ba4ec, #0d3c98); }
.cap svg { width: 8px; height: 8px; margin-bottom: 2px; fill: #fff; stroke: #fff; stroke-width: 1; }
.obj svg { border: 1px solid #7d93b8; border-radius: 3px; background: #e6effd; fill: none; stroke: #35539d; }
.align svg { fill: none; stroke: #7c93ba; }

/* Document frame */
.workspace { flex: 1; display: flex; }
.document { flex: 1; min-width: 0; display: flex; flex-direction: column; border-left: 2px solid #858585; border-top: 2px solid #77797d; background: #f8f8f8; }
.frame-edge { width: 9px; border-left: 2px solid #fff; border-right: 1px solid #28c6e8; background: linear-gradient(#bdd3ea, #e0ecf8 88px, #b8d2ec 90px); }
.backdrop { width: 5px; border-left: 2px solid #101018; background: linear-gradient(#8b8ea4, #686f91 180px, #e8e8ea 182px); }
.tabs { display: flex; align-items: flex-end; height: 25px; padding-left: 6px; border-bottom: 1px solid #9fa3a6; background: linear-gradient(#acbbc3, #c1ced6 35%, #d8dde6 80%, #a9adb1); }
.tabs button { display: flex; align-items: center; gap: 8px; height: 19px; padding: 0 9px 0 13px; border-radius: 5px 5px 0 0; background: #f8f8f8; box-shadow: 1px 0 2px #777; font: 12px/16px "Liberation Sans", sans-serif; color: #000; }
.tabs .second { padding: 0 1px 0 8px; gap: 9px; }
.tabs svg { width: 10px; height: 10px; }
.tabs button.active { position: relative; height: 24px; margin-bottom: -1px; padding: 0 24px; font-weight: bold; }

.sheet { position: relative; flex: 1; padding: 4px 0 0 2px; }
.filters { display: flex; align-items: flex-start; }
.listbox { border: 1px solid #007aff; border-radius: 2px; background: #fff; }
.dates { width: 239px; margin-right: 3px; }
.year { margin: 0 0 26px 2px; }
.days { width: 237px; margin-right: 5px; }
.company { width: 180px; margin-right: 4px; }
.store { width: 173px; margin-right: 4px; }
.group { width: 176px; margin-right: 3px; }
.subgroup { width: 162px; padding-bottom: 1px; }
.caption { display: flex; align-items: center; justify-content: space-between; height: 16px; padding: 0 2px 0 4px; background: #f6f6f6; }
.caption h2 { font-size: 11px; font-weight: bold; color: #007dbd; }
.caption svg { width: 12px; height: 12px; }
.cells { display: grid; grid-auto-rows: 15px; }
.cells.four { grid-template-columns: repeat(4, 1fr); }
.cells.six { grid-template-columns: repeat(6, 1fr); }
.cells > * { border-left: 1px solid #dcdcdc; }
.cells.four > :nth-child(4n+1), .cells.six > :nth-child(6n+1) { border-left-color: transparent; }
.listbox label { display: flex; align-items: center; gap: 3px; height: 15px; padding-left: 1px; white-space: nowrap; }
.listbox label.off { color: #8c8c8c; }
.listbox input { appearance: none; flex: none; width: 9px; height: 9px; margin: 0 0 2px; border: 1px solid #8f8f8f; border-radius: 2px; background: #fff; box-shadow: 0 1px 1px #bbb; }
.listbox .off input { background: #d6d6d6; box-shadow: none; }
.listbox input:checked { border-color: #067a13; background: #16c521; }
.listbox input:checked::after { content: ""; display: block; width: 3px; height: 5px; margin: 0 0 0 2px; border: solid #043d0a; border-width: 0 1px 1px 0; transform: rotate(45deg); }
.scroller { display: flex; justify-content: space-between; overflow: hidden; }
.clipped { height: 64px; }
.plain li { height: 15px; padding: 0 1px; }
.plain .chosen { background: #d9d9d9; color: #000; }
.vbar { display: flex; flex-direction: column; align-items: center; width: 11px; padding: 4px 0 2px; }
.vbar .thumb { width: 5px; height: 4px; margin: 3px 0 auto; }
.vbar .thumb.long { height: 10px; }
.hbar { display: flex; align-items: center; height: 11px; padding: 0 14px 0 3px; gap: 4px; }
.hbar .thumb { flex: 1; height: 5px; margin-right: 14px; }
.thumb { border-radius: 3px; background: #cecece; }
.up, .down, .left, .right { border: 4px solid transparent; }
.up { border-top: 0; border-bottom: 7px solid #cecece; }
.down { border-bottom: 0; border-top: 7px solid #cecece; }
.left { border-left: 0; border-right: 7px solid #cecece; }
.right { border-right: 0; border-left: 7px solid #cecece; }
.group .hbar { height: 12px; }
.company .hbar { height: 13px; }

/* Panels */
.panels { display: flex; align-items: flex-start; margin-top: 1px; }
.panel { border-radius: 2px; }
.main-panel { width: 620px; margin: 0 52px 0 7px; background: #e8e8e8; }
.side { width: 509px; margin-top: 108px; }
.side-panel { border: 1px solid #d2d2d2; background: #d2d2d2; }
.panel-title { display: flex; align-items: center; justify-content: space-between; height: 19px; padding: 0 4px 0 5px; }
.panel-title h2 { font-size: 13px; font-weight: bold; line-height: 18px; }
.side-panel .panel-title { padding-right: 2px; }
.panel-tools { display: flex; align-items: center; gap: 4px; height: 18px; }
.panel-tools svg { display: block; width: 11px; height: 11px; }
.panel-tools .xl { font: 11px/12px "DejaVu Sans Condensed", sans-serif; color: #777; }
.panel-tools .max { margin-left: 2px; }
table { width: 100%; table-layout: fixed; border-collapse: collapse; background: #fff; }
th, td { height: 15px; padding: 0 1px; border: 1px solid #dcdcdc; line-height: 14px; white-space: nowrap; text-align: right; }
th { font-weight: bold; text-align: left; background: #f4f4f4; }
td:first-child, td.none { text-align: left; }
.total td { font-weight: bold; color: #000; background: #f4f4f4; }
.main-panel tbody td:nth-child(4) { padding-right: 0; }
.c-group { width: 158px; }
.c-value { width: 112px; }
.c-km { width: 96px; }
.c-var { width: 119px; }
.c-id { width: 96px; }
.sortable { display: flex; align-items: center; justify-content: space-between; }
.sortable svg { width: 10px; height: 10px; }
.sortable .fold { margin-right: 2px; }
.folded { display: flex; align-items: center; justify-content: flex-end; gap: 2px; padding-right: 2px; }
.fold { width: 9px; height: 9px; border: 1px solid #7090ac; border-radius: 1px; background: linear-gradient(#333, #333) center / 5px 1px no-repeat, #f3efe5; }
th.measure { font-weight: normal; background: #fff; }
.km-row { display: flex; gap: 1px; margin: 108px 87px 0 4px; }
.km-row label { width: 234px; height: 22px; background: #989898; font-size: 14px; line-height: 22px; color: #303030; }
.km-row input { flex: 1; min-width: 0; height: 23px; padding: 0; border: 1px solid #007aff; border-radius: 2px; background: #f9f9f9; font: bold 11px/20px "DejaVu Sans Condensed", "DejaVu Sans", sans-serif; text-align: center; color: #7e3a3a; }

/* Notes drawn over the sheet */
.edge-mark { position: absolute; left: 0; top: 356px; width: 9px; height: 40px; background: #d6e8f8; }
.comment { position: absolute; left: -2px; top: 488px; width: 423px; height: 27px; padding: 7px 0 0 33px; background: #fff; font: 13px/16px "Liberation Sans", sans-serif; color: #111; }
.callout { position: absolute; left: 341px; top: 312px; width: 784px; height: 242px; fill: none; stroke: #3b9b16; stroke-width: 1.3; }
```
